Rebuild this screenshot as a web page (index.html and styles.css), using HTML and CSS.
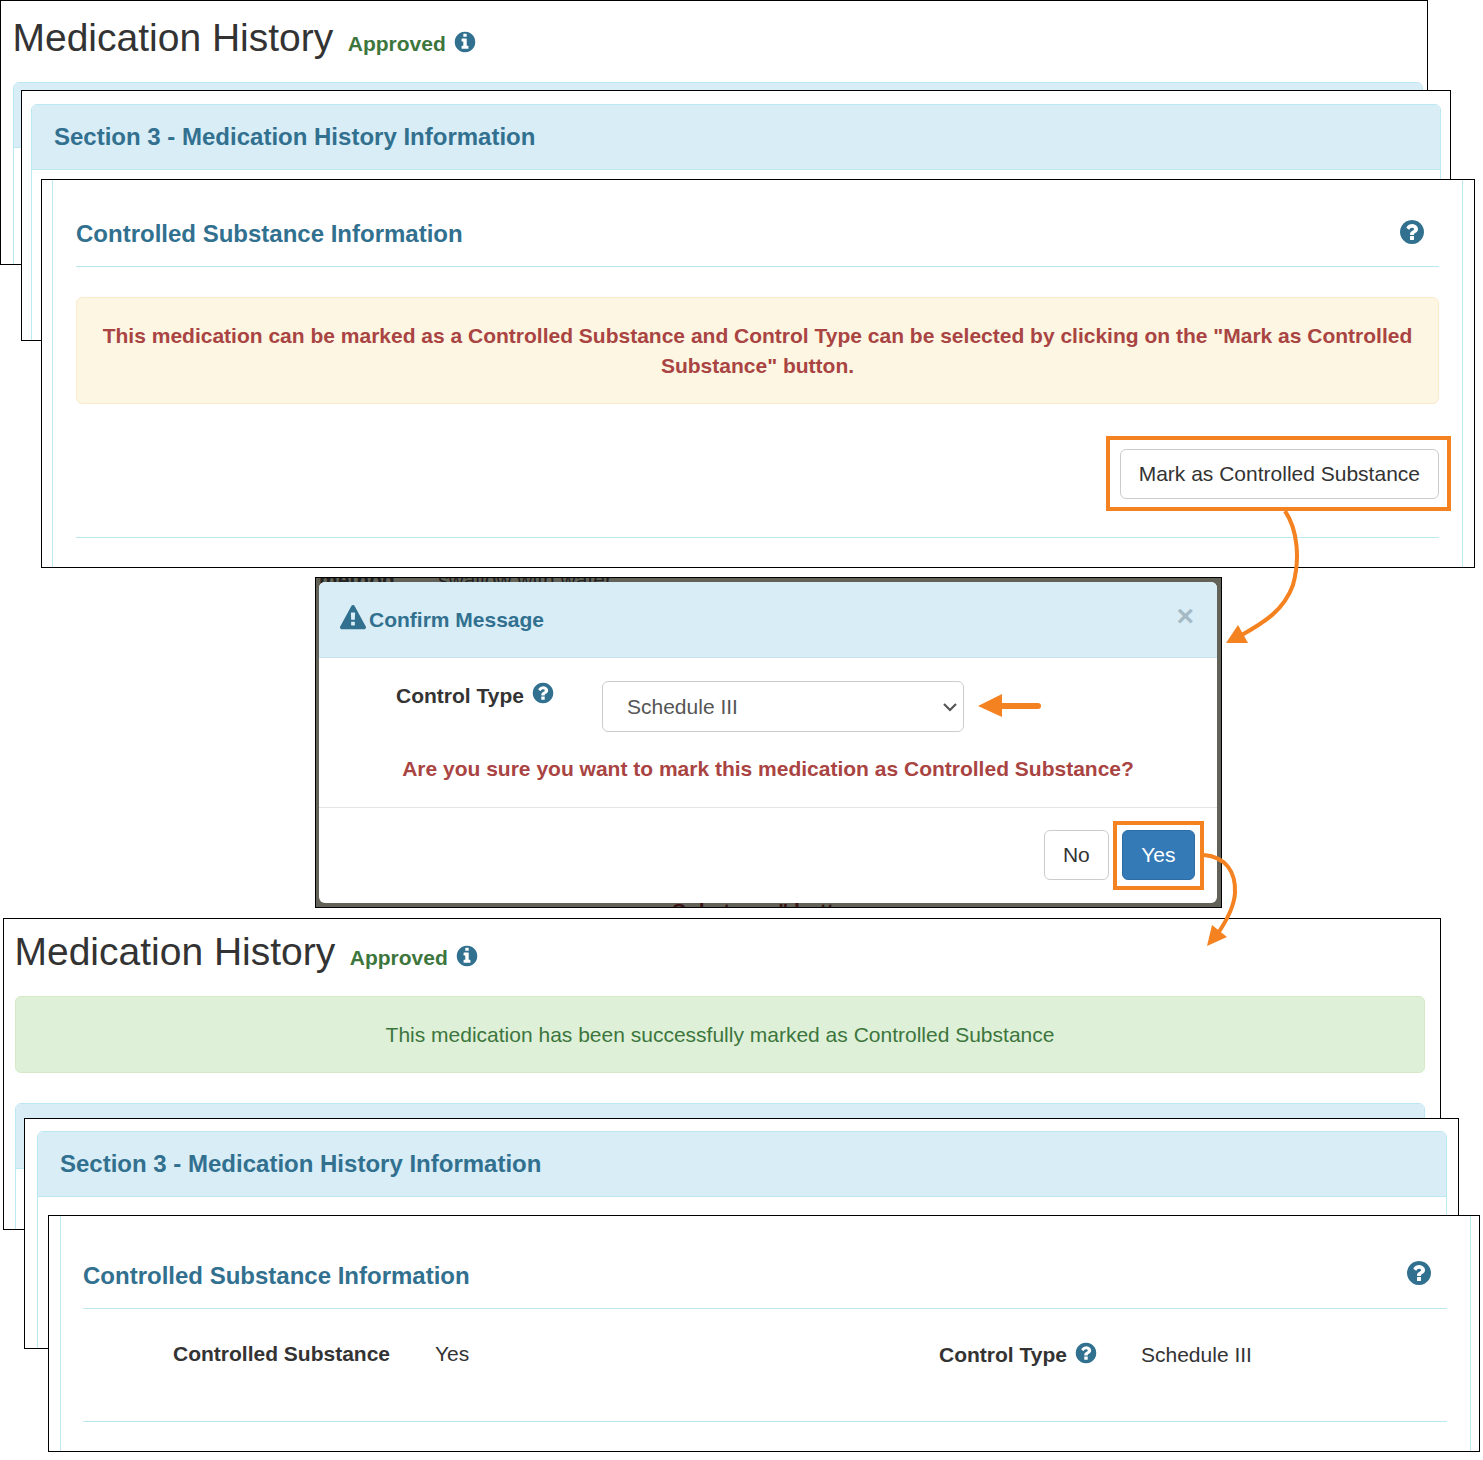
FILE: index.html
```html
<!DOCTYPE html>
<html lang="en">
<head>
  <meta charset="UTF-8">
  <meta name="viewport" content="width=1483, initial-scale=1.0">
  <title>Medication History</title>
  <link rel="stylesheet" href="styles.css">
</head>
<body>
  <svg class="icon-defs" width="0" height="0">
    <symbol id="i-info" viewBox="0 0 1792 1792"><path d="M1152 1376v-160q0-14-9-23t-23-9h-96v-512q0-14-9-23t-23-9h-320q-14 0-23 9t-9 23v160q0 14 9 23t23 9h96v320h-96q-14 0-23 9t-9 23v160q0 14 9 23t23 9h448q14 0 23-9t9-23zm-128-896v-160q0-14-9-23t-23-9h-192q-14 0-23 9t-9 23v160q0 14 9 23t23 9h192q14 0 23-9t9-23zm640 416q0 209-103 385.5t-279.5 279.5-385.5 103-385.5-103-279.5-279.5-103-385.5 103-385.5 279.5-279.5 385.5-103 385.5 103 279.5 279.5 103 385.5z"/></symbol>
    <symbol id="i-help" viewBox="0 0 1792 1792"><path d="M1024 1376v-192q0-14-9-23t-23-9h-192q-14 0-23 9t-9 23v192q0 14 9 23t23 9h192q14 0 23-9t9-23zm256-672q0-88-55.5-163t-138.5-116-170-41q-243 0-371 213-15 24 8 42l132 100q7 6 19 6 16 0 25-12 53-68 86-92 34-24 86-24 48 0 85.5 26t37.5 59q0 38-20 61t-68 45q-63 28-115.5 86.5t-52.5 125.5v36q0 14 9 23t23 9h192q14 0 23-9t9-23q0-19 21.5-49.5t54.5-49.5q32-18 49-28.5t46-35 44.5-48 28-60.5 12.5-81zm384 192q0 209-103 385.5t-279.5 279.5-385.5 103-385.5-103-279.5-279.5-103-385.5 103-385.5 279.5-279.5 385.5-103 385.5 103 279.5 279.5 103 385.5z"/></symbol>
    <symbol id="i-warn" viewBox="0 0 1792 1792"><path d="M1024 1375v-190q0-14-9.5-23.5t-22.5-9.5h-192q-13 0-22.5 9.5t-9.5 23.5v190q0 14 9.5 23.5t22.5 9.5h192q13 0 22.5-9.5t9.5-23.5zm-2-374l18-459q0-12-10-19-13-11-24-11h-220q-11 0-24 11-10 7-10 21l17 457q0 10 10 16.5t24 6.5h185q14 0 23.5-6.5t10.5-16.5zm-14-934l768 1408q35 63-2 126-17 29-46.5 46t-63.5 17h-1536q-34 0-63.5-17t-46.5-46q-37-63-2-126l768-1408q17-31 47-49t65-18 65 18 47 49z"/></symbol>
  </svg>

  <div class="canvas">
    <!-- first set of screenshots -->
    <section class="shot shot-a1">
      <div class="page-head">
        <h1 class="page-title">Medication History</h1>
        <span class="status">Approved</span>
        <svg class="icon icon-sm"><use href="#i-info"/></svg>
      </div>
      <div class="panel panel-a1">
        <div class="panel-heading"></div>
      </div>
    </section>

    <section class="shot shot-a2">
      <div class="panel panel-a2">
        <div class="panel-heading">
          <span class="ghost ghost-a2">Section 1 - General Information</span>
          <h2 class="panel-title">Section 3 - Medication History Information</h2>
        </div>
      </div>
    </section>

    <section class="shot shot-a3">
      <div class="panel panel-body">
        <span class="ghost ghost-a3">Section 2 - Prior Information</span>
        <div class="sub-head">
          <h3 class="sub-title">Controlled Substance Information</h3>
          <svg class="icon icon-lg"><use href="#i-help"/></svg>
        </div>
        <div class="alert alert-warning">This medication can be marked as a Controlled Substance and Control Type can be selected by clicking on the "Mark as Controlled Substance" button.</div>
        <div class="actions">
          <button class="btn">Mark as Controlled Substance</button>
        </div>
        <div class="rule"></div>
      </div>
    </section>

    <!-- confirm dialog -->
    <section class="backdrop">
      <span class="behind behind-method">method</span>
      <span class="behind behind-water">swallow with water</span>
      <span class="behind behind-button">Substance" button</span>
      <div class="modal">
        <div class="modal-head">
          <svg class="icon icon-warn"><use href="#i-warn"/></svg>
          <span class="modal-title">Confirm Message</span>
          <span class="modal-close">&times;</span>
        </div>
        <div class="modal-form">
          <label class="modal-label">Control Type <svg class="icon icon-sm"><use href="#i-help"/></svg></label>
          <select class="select">
            <option>Schedule III</option>
          </select>
        </div>
        <p class="modal-question">Are you sure you want to mark this medication as Controlled Substance?</p>
        <div class="modal-foot">
          <button class="btn">No</button>
          <button class="btn btn-primary">Yes</button>
        </div>
      </div>
    </section>

    <!-- second set of screenshots -->
    <section class="shot shot-b1">
      <div class="page-head page-head-b">
        <h1 class="page-title">Medication History</h1>
        <span class="status">Approved</span>
        <svg class="icon icon-sm"><use href="#i-info"/></svg>
      </div>
      <div class="alert alert-success">This medication has been successfully marked as Controlled Substance</div>
      <div class="panel panel-b1">
        <div class="panel-heading"></div>
      </div>
    </section>

    <section class="shot shot-b2">
      <div class="panel panel-b2">
        <div class="panel-heading">
          <span class="ghost ghost-b2">Section 1 - General Information</span>
          <h2 class="panel-title">Section 3 - Medication History Information</h2>
        </div>
      </div>
    </section>

    <section class="shot shot-b3">
      <div class="panel panel-body panel-body-b">
        <span class="ghost ghost-b3">Section 2 - Prior Information</span>
        <div class="sub-head sub-head-b">
          <h3 class="sub-title">Controlled Substance Information</h3>
          <svg class="icon icon-lg"><use href="#i-help"/></svg>
        </div>
        <div class="detail-row">
          <span class="detail-label detail-raised">Controlled Substance</span>
          <span class="detail-value detail-raised">Yes</span>
          <span class="detail-label">Control Type <svg class="icon icon-sm"><use href="#i-help"/></svg></span>
          <span class="detail-value">Schedule III</span>
        </div>
        <div class="rule"></div>
      </div>
    </section>

    <!-- orange annotations -->
    <div class="mark mark-button"></div>
    <div class="mark mark-yes"></div>
    <svg class="arrows" width="1483" height="1460" viewBox="0 0 1483 1460">
      <g fill="none" stroke="#f58220" stroke-width="4">
        <path d="M1285 511C1298 530 1300 560 1293 585C1284 610 1265 622 1240 636"/>
        <path d="M1204 855C1226 857 1236 872 1235 893C1234 908 1226 922 1216 936"/>
      </g>
      <path d="M1038 706H1000" fill="none" stroke="#f58220" stroke-width="6" stroke-linecap="round"/>
      <g fill="#f58220">
        <path d="M1226 643L1238 625L1248 643Z"/>
        <path d="M978 706L1002 694V717Z"/>
        <path d="M1207 946L1212 925L1227 937Z"/>
      </g>
    </svg>
  </div>
</body>
</html>
```

FILE: styles.css
```css
:root {
  --blue: #31708f;
  --blue-light: #d9edf7;
  --line: #bce8f1;
  --red: #a94442;
  --orange: #f58220;
  --text: #333;
}
body {
  margin: 0;
  background: #fff;
  font-family: "Liberation Sans", Arial, sans-serif;
  font-size: 21px;
  line-height: 30px;
  color: var(--text);
}
.icon-defs {
  position: absolute;
}
.canvas {
  position: relative;
  width: 1483px;
  height: 1460px;
  overflow: hidden;
}
.icon {
  fill: var(--blue);
  display: inline-block;
}
.icon-sm {
  width: 24px;
  height: 24px;
}
.icon-lg {
  width: 28px;
  height: 28px;
}
.icon-warn {
  width: 26px;
  height: 26px;
}

/* screenshots stacked on the canvas */
.shot {
  position: absolute;
  box-sizing: border-box;
  border: 1px solid #000;
  background: #fff;
  overflow: hidden;
}
.shot-a1 { left: 0; top: 0; width: 1428px; height: 265px; }
.shot-a2 { left: 21px; top: 90px; width: 1430px; height: 251px; }
.shot-a3 { left: 41px; top: 179px; width: 1434px; height: 389px; }
.shot-b1 { left: 3px; top: 918px; width: 1438px; height: 312px; }
.shot-b2 { left: 24px; top: 1118px; width: 1435px; height: 231px; }
.shot-b3 { left: 48px; top: 1215px; width: 1432px; height: 237px; }

.page-head {
  display: flex;
  align-items: center;
  height: 81px;
  padding: 0 0 8px 11.5px;
  box-sizing: border-box;
}
.page-head-b {
  height: 77px;
  padding: 0 0 12px 10.5px;
}
.page-title {
  margin: 0 14.5px 0 0;
  font-size: 39px;
  line-height: 44px;
  font-weight: 400;
}
.status {
  margin: 12px 7px 0 0;
  font-weight: 700;
  color: #3c763d;
}
.page-head-b .status {
  margin-top: 12px;
}
.page-head .icon {
  margin-top: 9px;
}

.panel {
  position: relative;
  box-sizing: border-box;
  width: 1410px;
  height: 400px;
  border: 1px solid var(--line);
  border-radius: 6px;
}
.panel-a1 { margin-left: 12px; }
.panel-a2 { margin: 13px 0 0 9px; }
.panel-b1 { margin: 30px 0 0 11px; }
.panel-b2 { margin: 12px 0 0 12px; }
.panel-heading {
  height: 64px;
  background: var(--blue-light);
  border-bottom: 1px solid var(--line);
  border-radius: 5px 5px 0 0;
  display: flex;
  align-items: center;
  padding-left: 22px;
}
.panel-title {
  margin: 0;
  font-size: 24px;
  line-height: 30px;
  font-weight: 700;
  color: var(--blue);
}
/* faint text bleeding through from the screenshot underneath */
.ghost {
  position: absolute;
  font-size: 18px;
  line-height: 16px;
  letter-spacing: 1.5px;
  font-weight: 700;
  white-space: nowrap;
  color: rgba(49,112,143,0.02);
}
.ghost-a2 { left: 6px; top: -1px; }
.ghost-b2 { left: 6px; top: -1px; }
.ghost-a3 { left: 9px; top: 20px; color: rgba(0,0,0,0.012); }
.ghost-b3 { left: 8px; top: 20px; color: rgba(0,0,0,0.012); }

.panel-body {
  width: 1411px;
  height: 420px;
  margin: -1px 0 0 10px;
  padding: 0 23px;
  border-radius: 0;
}
.panel-body-b {
  margin-left: 11px;
  padding: 0 23px 0 22px;
}
.sub-head {
  display: flex;
  justify-content: space-between;
  align-items: center;
  box-sizing: border-box;
  height: 87px;
  padding: 39px 13px 17px 0;
  border-bottom: 1px solid var(--line);
}
.sub-head .icon {
  margin-top: -4px;
}
.sub-head-b {
  height: 93px;
  padding: 45px 14px 17px 0;
}
.sub-head-b .icon {
  margin-top: -6px;
}
.sub-title {
  margin: 0;
  font-size: 24px;
  line-height: 30px;
  font-weight: 700;
  color: var(--blue);
}
.alert {
  box-sizing: border-box;
  border: 1px solid;
  border-radius: 6px;
  text-align: center;
}
.alert-warning {
  margin-top: 30px;
  padding: 22.5px 15px;
  background: #fcf6e3;
  border-color: #faebcc;
  color: var(--red);
  font-weight: 700;
}
.alert-success {
  width: 1410px;
  height: 77px;
  margin-left: 11px;
  padding-top: 23px;
  background: #dff0d8;
  border-color: #d6e9c6;
  color: #3c763d;
}
.actions {
  display: flex;
  justify-content: flex-end;
  margin-top: 45px;
}
.btn {
  box-sizing: border-box;
  height: 50px;
  padding: 0 18px;
  background: #fff;
  border: 1px solid #ccc;
  border-radius: 6px;
  font-family: inherit;
  font-size: 21px;
  color: var(--text);
}
.btn-primary {
  padding: 0 18.5px;
  background: #337ab7;
  border-color: #2e6da4;
  color: #fff;
}
.rule {
  height: 1px;
  margin-top: 38px;
  background: var(--line);
}
.detail-row {
  display: grid;
  grid-template-columns: 262px 504px 202px auto;
  padding: 31px 0 0 90px;
}
.detail-label {
  font-weight: 700;
  white-space: nowrap;
}
.detail-label .icon {
  vertical-align: -3px;
  margin-left: 1px;
}
.detail-raised {
  margin-top: -1px;
}
.detail-row + .rule {
  margin-top: 51px;
}

/* confirm dialog */
.backdrop {
  position: absolute;
  left: 315px;
  top: 577px;
  box-sizing: border-box;
  width: 907px;
  height: 331px;
  padding: 4px 4px 4px 3px;
  background: #626258;
  border: 1px solid #000;
  overflow: hidden;
}
.behind {
  position: absolute;
  white-space: nowrap;
  color: #222;
}
.behind-method { left: 3px; top: -13px; font-weight: 700; }
.behind-water { left: 122px; top: -13px; }
.behind-button { left: 356px; top: 318px; font-weight: 700; color: #3a1414; }
.modal {
  position: relative;
  height: 100%;
  background: #fff;
  border-radius: 6px;
  overflow: hidden;
}
.modal-head {
  display: flex;
  align-items: center;
  box-sizing: border-box;
  height: 76px;
  padding: 0 23px 0 21px;
  background: var(--blue-light);
  border-bottom: 1px solid #c6e2ee;
}
.modal-head .icon {
  margin: -4px 3px 0 0;
}
.modal-title {
  font-weight: 700;
  color: var(--blue);
}
.modal-close {
  margin: -8px 0 0 auto;
  font-size: 30px;
  font-weight: 700;
  color: #a5bac4;
}
.modal-form {
  display: flex;
  align-items: flex-start;
  padding: 23px 0 0 77px;
}
.modal-label {
  width: 206px;
  font-weight: 700;
}
.modal-label .icon {
  vertical-align: -2px;
  margin-left: 1px;
}
.select {
  appearance: none;
  box-sizing: border-box;
  width: 362px;
  height: 51px;
  padding: 0 20px 0 24px;
  background: #fff url("data:image/svg+xml,%3Csvg xmlns='http://www.w3.org/2000/svg' width='14' height='9'%3E%3Cpath d='M1 1l6 6 6-6' fill='none' stroke='%23555' stroke-width='2.2'/%3E%3C/svg%3E") no-repeat 340px 21px;
  border: 1px solid #ccc;
  border-radius: 6px;
  font-family: inherit;
  font-size: 21px;
  color: #555;
}
.modal-question {
  margin: 22px 0 23px;
  text-align: center;
  font-weight: 700;
  color: var(--red);
}
.modal-foot {
  display: flex;
  justify-content: flex-end;
  gap: 13px;
  padding: 22px 22px 0 0;
  border-top: 1px solid #e5e5e5;
}

/* orange annotations */
.mark {
  position: absolute;
  box-sizing: border-box;
  border: 4.5px solid var(--orange);
}
.mark-button { left: 1106px; top: 436px; width: 345px; height: 75px; }
.mark-yes { left: 1113px; top: 821px; width: 91px; height: 69px; }
.arrows {
  position: absolute;
  left: 0;
  top: 0;
  pointer-events: none;
}
```
